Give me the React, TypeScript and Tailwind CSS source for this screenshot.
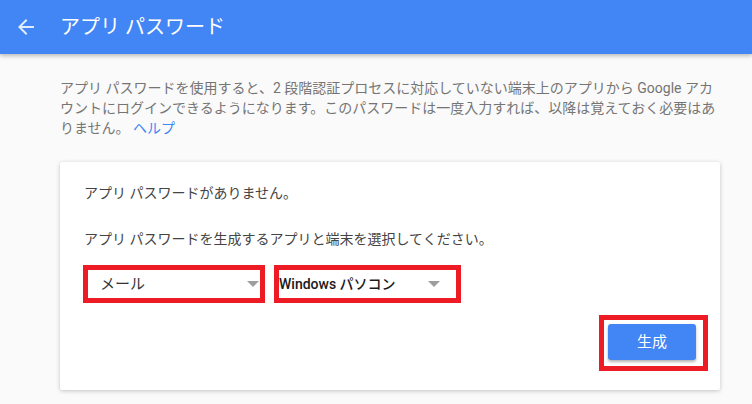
import React from "react";

const font = { fontFamily: 'Roboto, "Noto Sans CJK JP", "Noto Sans", sans-serif' };

function Caret() {
  return (
    <svg width="12" height="6" viewBox="0 0 12 6" className="shrink-0">
      <path d="M0 0h12L6 6z" fill="#9e9e9e" />
    </svg>
  );
}

export default function App() {
  return (
    <div className="w-[752px] h-[404px] overflow-hidden bg-[#fafafa] text-[14px]" style={font}>
      <header className="relative z-10 h-[54px] bg-[#4285f4] flex items-center shadow-[0_2px_4px_rgba(0,0,0,0.25)]">
        <svg width="24" height="24" viewBox="0 0 24 24" className="ml-[14px]">
          <path d="M20 11H7.83l5.59-5.59L12 4l-8 8 8 8 1.41-1.41L7.83 13H20v-2z" fill="#e3ecfd" />
        </svg>
        <h1 className="ml-[22px] text-[20px] text-white font-normal leading-none">アプリ パスワード</h1>
      </header>

      <main className="px-[60px] pt-[24px]">
        <p className="text-[#757575] leading-[20px] whitespace-nowrap">
          アプリ パスワードを使用すると、2 段階認証プロセスに対応していない端末上のアプリから Google アカ
          <br />
          ウントにログインできるようになります。このパスワードは一度入力すれば、以降は覚えておく必要はあ
          <br />
          りません。 <span className="text-[#4285f4]">ヘルプ</span>
        </p>

        <section className="mt-[24px] w-[660px] h-[228px] bg-white rounded-[2px] shadow-[0_1px_4px_rgba(0,0,0,0.22)] pt-[21px] flex flex-col">
          <p className="pl-[24px] text-[#444] leading-[20px]">アプリ パスワードがありません。</p>
          <p className="pl-[24px] mt-[26px] text-[#444] leading-[20px]">
            アプリ パスワードを生成するアプリと端末を選択してください。
          </p>

          <div className="pl-[23px] mt-[16px] flex gap-[9px]">
            <div className="w-[182px] h-[38px] border-[5px] border-[#ed1c24] bg-white flex items-center pl-[12px] pr-[1px]">
              <span className="flex-1 text-[#333] text-[15px]">メール</span>
              <Caret />
            </div>
            <div className="w-[187px] h-[38px] border-[5px] border-[#ed1c24] bg-white flex items-center pl-0 pr-[16px]">
              <span className="flex-1 text-[#1a1a1a] text-[14px] font-medium">Windows パソコン</span>
              <Caret />
            </div>
          </div>

          <div className="mt-[12px] pr-[12px] flex justify-end">
            <div className="w-[109px] h-[56px] border-[5px] border-[#ed1c24] pl-[4px] pt-[4px]">
              <button className="w-[88px] h-[36px] rounded-[3px] bg-[#4285f4] text-white text-[15px] shadow-[0_2px_3px_rgba(0,0,0,0.3)]">
                生成
              </button>
            </div>
          </div>
        </section>
      </main>
    </div>
  );
}
